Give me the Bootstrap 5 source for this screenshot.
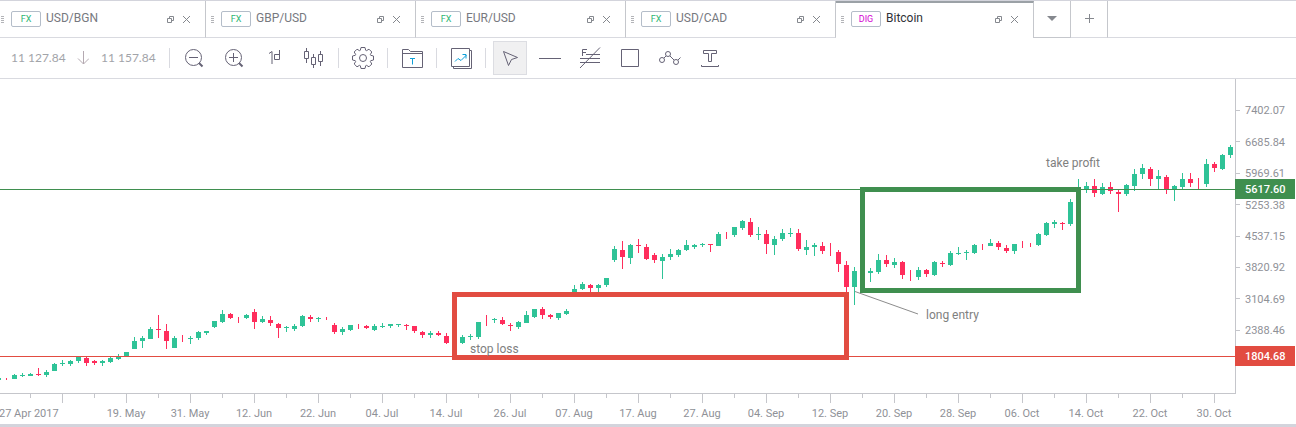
<!DOCTYPE html>
<html lang="en">
<head>
<meta charset="utf-8">
<meta name="viewport" content="width=device-width, initial-scale=1">
<title>Bitcoin chart</title>
<link rel="stylesheet" href="https://cdn.jsdelivr.net/npm/bootstrap@5.3.0/dist/css/bootstrap.min.css">
<style>
  body { font-family: Roboto, sans-serif; font-size: 12px; line-height: 16px; color: #77797f; }
  .tabs-strip { border-top: 1px solid #d3d4dc; height: 38px; }
  .doc-tab { flex: 0 1 210px; height: 37px; padding: 0 15px 0 5px; border-right: 1px solid #c5c7cc; border-bottom: 1px solid #d9dae0; }
  .doc-tab:first-child { flex-basis: 206px; padding-left: 1px; }
  .doc-tab.active { flex-basis: 198px; border-top: 2px solid #9ba1a6; border-bottom: 0; color: #2f3136; padding-bottom: 3px; }
  .doc-tab a { margin-left: 5px; padding-bottom: 2px; }
  .doc-tab .bare + .bare { margin-left: 9px; }
  .grip { width: 10px; height: 7px; flex: none; }
  .kind { width: 30px; height: 16px; border: 1px solid #b4bdc9; border-radius: 2px; font-size: 9px; line-height: 15px; color: #2bb673; flex: none; }
  .kind-dig { color: #d400d4; }
  .tab-btn { width: 37px; height: 37px; padding-bottom: 2px !important; border-right: 1px solid #c5c7cc !important; border-bottom: 1px solid #d9dae0 !important; }
  .tab-menu { border-bottom-color: #c5c7cc !important; }
  .tabs-rest { border-bottom: 1px solid #d9dae0; height: 37px; }
  .bare { background: none; border: 0; padding: 0; display: flex; align-items: center; justify-content: center; }
  .tools { height: 41px; border-bottom: 1px solid #d9dae0; padding-left: 11px; }
  .quote { font-family: Lato, sans-serif; font-size: 12px; color: #a2a4a9; width: 54px; white-space: nowrap; }
  .trend { margin: 0 12px; }
  .tool { width: 34px; height: 34px; color: #656275; }
  .tool + .tool { margin-left: 6px; }
  .tool.active { background: #f0f0f1; outline: 1px solid #dcdde2; outline-offset: -1px; }
  .tool-sep { width: 1px; height: 20px; margin: 0 7px; background: #d9dae0; }
  .quote + .tool-sep { margin-left: 14px; }
  svg { display: block; }
  .icon { fill: none; stroke: currentColor; stroke-width: 1; }
  .chart text { font-family: Roboto, sans-serif; font-size: 11px; fill: #8f9197; }
  .chart .note { font-size: 12px; fill: #808080; }
  .chart .tagtext { fill: #fff; font-weight: 500; }
  .page-end { height: 3px; background: #d3d4dc; }
</style>
<script src="https://cdn.jsdelivr.net/npm/bootstrap@5.3.0/dist/js/bootstrap.bundle.min.js"></script>
</head>
<body>
<svg width="0" height="0" class="position-absolute" aria-hidden="true">
  <symbol id="pop" viewBox="0 0 7 7"><path d="M2.5 2V.5h4v4H5M.5 2.5h4v4h-4z" fill="none" stroke="#85888e"/></symbol>
  <symbol id="close" viewBox="0 0 7 7"><path d="M0 0l7 7M7 0l-7 7" fill="none" stroke="#85888e"/></symbol>
  <symbol id="grip" viewBox="0 0 10 7"><path d="M0 .5h3M0 2.5h3M0 4.5h3M0 6.5h3" stroke="#b3b4b8"/></symbol>
</svg>

<nav class="tabs-strip d-flex" aria-label="Instruments">
  <div class="doc-tab d-flex align-items-center"><svg class="grip"><use href="#grip"/></svg><span class="kind text-center">FX</span><a class="text-reset text-decoration-none me-auto" href="#">USD/BGN</a><button class="bare" aria-label="Detach"><svg width="7" height="7"><use href="#pop"/></svg></button><button class="bare" aria-label="Close"><svg width="7" height="7"><use href="#close"/></svg></button></div>
  <div class="doc-tab d-flex align-items-center"><svg class="grip"><use href="#grip"/></svg><span class="kind text-center">FX</span><a class="text-reset text-decoration-none me-auto" href="#">GBP/USD</a><button class="bare" aria-label="Detach"><svg width="7" height="7"><use href="#pop"/></svg></button><button class="bare" aria-label="Close"><svg width="7" height="7"><use href="#close"/></svg></button></div>
  <div class="doc-tab d-flex align-items-center"><svg class="grip"><use href="#grip"/></svg><span class="kind text-center">FX</span><a class="text-reset text-decoration-none me-auto" href="#">EUR/USD</a><button class="bare" aria-label="Detach"><svg width="7" height="7"><use href="#pop"/></svg></button><button class="bare" aria-label="Close"><svg width="7" height="7"><use href="#close"/></svg></button></div>
  <div class="doc-tab d-flex align-items-center"><svg class="grip"><use href="#grip"/></svg><span class="kind text-center">FX</span><a class="text-reset text-decoration-none me-auto" href="#">USD/CAD</a><button class="bare" aria-label="Detach"><svg width="7" height="7"><use href="#pop"/></svg></button><button class="bare" aria-label="Close"><svg width="7" height="7"><use href="#close"/></svg></button></div>
  <div class="doc-tab active d-flex align-items-center"><svg class="grip"><use href="#grip"/></svg><span class="kind kind-dig text-center">DIG</span><a class="text-reset text-decoration-none me-auto" href="#">Bitcoin</a><button class="bare" aria-label="Detach"><svg width="7" height="7"><use href="#pop"/></svg></button><button class="bare" aria-label="Close"><svg width="7" height="7"><use href="#close"/></svg></button></div>
  <button class="bare tab-btn tab-menu" aria-label="All tabs"><svg width="10" height="5"><path d="M0 0h10L5 5z" fill="#85888e"/></svg></button>
  <button class="bare tab-btn" aria-label="Add tab"><svg width="9" height="9"><path d="M4.500 0v9M0 4.500h9" stroke="#85888e"/></svg></button>
  <div class="tabs-rest flex-grow-1"></div>
</nav>

<div class="tools d-flex align-items-center" role="toolbar">
  <span class="quote">11 127.84</span>
  <svg class="trend" width="12" height="14"><path d="M6.500 0v13M1 7.500l5.500 5.500L12 7.500" fill="none" stroke="#b4a9b1"/></svg>
  <span class="quote">11 157.84</span>
  <span class="tool-sep"></span>
  <button class="bare tool" aria-label="Zoom out"><svg class="icon" width="34" height="34"><circle cx="16.500" cy="16.500" r="8"/><path d="M12 16.500h9"/><path d="M22 22l3.500 3.500" stroke-width="2"/></svg></button>
  <button class="bare tool" aria-label="Zoom in"><svg class="icon" width="34" height="34"><circle cx="16.500" cy="16.500" r="8"/><path d="M12 16.500h9M16.500 12v9"/><path d="M22 22l3.500 3.500" stroke-width="2"/></svg></button>
  <button class="bare tool" aria-label="Period one day"><svg class="icon" width="34" height="34"><path d="M12 12.500l3-2V23M22.500 9v9.500h-5v-5h5"/></svg></button>
  <button class="bare tool" aria-label="Candles"><svg class="icon" width="34" height="34"><path d="M9.500 7v3M9.500 18v4M7.500 10.500h4v7h-4zM16.500 13v4M16.500 24v3M14.500 16.500h4v7h-4zM23.500 10v3M23.500 21v4M21.500 13.500h4v7h-4z"/></svg></button>
  <span class="tool-sep"></span>
  <button class="bare tool" aria-label="Settings"><svg class="icon" width="34" height="34"><g transform="translate(17 17)"><circle r="3.500"/><path d="M10.500-2 10.500 2 7.700 2.700 7.350 3.500 8.800 6 6 8.800 3.500 7.350 2.700 7.700 2 10.500-2 10.500-2.700 7.700-3.500 7.350-6 8.800-8.800 6-7.350 3.500-7.700 2.700-10.500 2-10.500-2-7.700-2.700-7.350-3.500-8.800-6-6-8.800-3.500-7.350-2.700-7.700-2-10.500 2-10.500 2.700-7.700 3.500-7.350 6-8.800 8.800-6 7.350-3.500 7.700-2.700z"/></g></svg></button>
  <span class="tool-sep"></span>
  <button class="bare tool" aria-label="Templates"><svg class="icon" width="34" height="34"><path d="M7.500 26.500v-18h6l2 2h12v16zM7.500 12.500h20"/><path d="M15 17.500h5M17.500 17.500v6" stroke="#0f9fd8"/></svg></button>
  <span class="tool-sep"></span>
  <button class="bare tool" aria-label="Indicators"><svg class="icon" width="34" height="34"><path d="M7.500 7.500h18v18h-18zM25.500 9.500h2v18h-18v-2"/><path d="M11 20.500l3-3 3 2 5.500-5.500M18.500 13.500H22v4" stroke="#0f9fd8"/></svg></button>
  <span class="tool-sep"></span>
  <button class="bare tool active" aria-label="Select"><svg class="icon" width="34" height="34"><path d="M10.500 10.500l14 6-6 2-3 6z"/></svg></button>
  <button class="bare tool" aria-label="Line"><svg class="icon" width="34" height="34"><path d="M6 17.500h22"/></svg></button>
  <button class="bare tool" aria-label="Fibonacci"><svg class="icon" width="34" height="34"><path d="M13 13.500h14M7 17.500h20M7 21.500h20M7 27L27 6.500M9.500 15V8.500H14M9.500 11.500H13"/></svg></button>
  <button class="bare tool" aria-label="Rectangle"><svg class="icon" width="34" height="34"><path d="M8.500 8.500h17v17h-17z"/></svg></button>
  <button class="bare tool" aria-label="Path"><svg class="icon" width="34" height="34"><circle cx="9" cy="19" r="2.500"/><circle cx="15" cy="13" r="2.500"/><circle cx="23" cy="21" r="2.500"/><path d="M11 17l2-2M17 15l4 4M25 19l2.500-2.500"/></svg></button>
  <button class="bare tool" aria-label="Text"><svg class="icon" width="34" height="34"><path d="M10.500 9.500h13v3h-5v8h-3v-8h-5zM8.500 24v1.500h17V24"/></svg></button>
</div>

<main>
  <svg class="chart w-100" viewBox="0 79 1296 345" role="img" aria-label="Bitcoin daily candles">
    <g id="candles" shape-rendering="crispEdges"></g>
    <g fill="#c5c6cb" shape-rendering="crispEdges" id="axes">
      <rect x="1235" y="79" width="1" height="315"/>
      <rect x="0" y="393" width="1236" height="1"/>
    </g>
    <g shape-rendering="crispEdges">
      <rect x="0" y="189" width="1236" height="1" fill="#3f8f4f"/>
      <rect x="0" y="356" width="1236" height="1" fill="#e24c41"/>
      <rect x="454.500" y="294.500" width="392" height="63" fill="none" stroke="#e24c41" stroke-width="5"/>
      <rect x="862.500" y="189.500" width="216" height="101" fill="none" stroke="#3f8f4f" stroke-width="5"/>
    </g>
    <path d="M855 291.500L918 314" stroke="#8c8c8c" fill="none"/>
    <text class="note" x="1046" y="167">take profit</text>
    <text class="note" x="926" y="319">long entry</text>
    <text class="note" x="470" y="353">stop loss</text>
    <g id="labels"></g>
    <rect x="1235" y="179" width="60" height="20" fill="#3f8f4f"/>
    <text class="tagtext" x="1245" y="193">5617.60</text>
    <rect x="1235" y="346" width="60" height="20" fill="#e24c41"/>
    <text class="tagtext" x="1245" y="360">1804.68</text>
  </svg>
</main>
<footer class="page-end"></footer>

<script>
  // One entry per day, 8 units apart: direction, high, body top, body bottom, low.
  // An entry with only two numbers is a bare wick.
  const days = `g378,378,380,380 r378,380 g374,375,379,379 g373,375,376,377 g373,374,376,376 r368,374,375,376 g370,372,375,377 g363,364,371,371
g360,363,364,366 g360,361,364,366 g356,357,361,363 r357,358,363,366 r360,361,363,365 g360,361,363,366 g357,358,362,363 g354,356,359,360
g352,352,356,356 g337,341,349,349 g336,338,341,348 g327,329,339,339 r315,329,330,338 r324,331,341,349 g336,338,348,348 r335,342
g336,338,339,344 g331,332,338,340 g331,331,333,335 g321,321,327,328 g310,314,322,323 r313,314,318,319 r317,323 g314,315,318,319
r309,312,322,329 g316,319,322,323 r316,320,323,326 r323,324,328,338 g326,327,328,332 g324,326,329,331 g315,316,326,327 r315,317,319,322
g317,318,319,322 r317,320 r323,325,332,334 g327,329,332,335 g325,325,330,331 r324,329 r325,326,328,329 g324,326,330,331
g323,326,327,328 g324,324,326,328 g324,324,325,327 r324,325,326,330 r326,326,331,333 r331,332,335,338 g331,333,335,338 r331,333,335,336
r333,336,343,344 r340,342 g335,337,343,344 g334,336,337,340 g322,322,337,339 r315,326 g318,319,320,323 r317,320,324,325
r323,325,326,331 g321,322,327,329 g311,315,323,323 g309,309,317,318 r307,309,315,319 r314,315,317,319 g313,313,318,320 g309,311,314,315
g285,289,292,292 g282,284,289,290 r284,285,288,292 g284,285,288,292 g278,278,285,287 g246,249,260,262 r241,250,257,269 g244,245,258,264
r239,245,246,253 r244,247,259,260 r253,255,260,263 g254,257,261,279 g249,254,257,260 g249,250,255,257 g240,245,250,251 g244,245,247,249
g243,244,245,247 r244,244,245,252 g232,234,246,246 r232,239 g227,227,235,237 g220,221,228,230 r218,222,235,237 g227,234,235,240
r230,234,244,254 g236,239,245,255 g229,233,239,241 g228,233,234,237 r229,233,249,251 g240,247,250,255 g243,245,247,256 r242,246,251,254
r243,256 r250,252,264,272 r261,265,287,292 g267,271,287,305 r270,280 g268,271,273,282 g254,260,272,274 r255,260,264,267
g258,262,265,268 r261,262,275,279 r270,281 g267,270,277,280 r269,270,274,277 g261,262,275,276 r261,263,264,267 g251,253,265,266
g247,253,254,255 g250,252,253,260 g244,245,253,254 r244,250 g239,243,246,246 r241,243,247,250 r245,248,251,253 g244,244,251,254
r241,248 r243,247 g233,234,245,246 g222,223,235,236 g220,222,224,228 r222,223,224,230 g199,202,224,226 g179,189
g182,186,189,193 r179,186,193,197 g183,187,194,195 r182,187,191,194 r190,192,194,212 g184,185,194,196 g169,174,186,191 g164,168,174,179
r167,169,179,186 g170,176,179,189 r175,177,189,194 g185,186,189,201 g173,179,187,189 r173,179,183,187 r178,189 g159,164,184,187
r162,164,168,172 g154,155,169,170 g145,147,155,158`.split(/\s+/);
  // Days whose candles are hidden behind a frame border.
  const hidden = [454, 862];
  const ns = 'http://www.w3.org/2000/svg';
  function add(parent, tag, attrs, text) {
    const el = document.createElementNS(ns, tag);
    for (const k in attrs) el.setAttribute(k, attrs[k]);
    if (text) el.textContent = text;
    document.getElementById(parent).appendChild(el);
  }
  days.forEach((d, i) => {
    const x = -2 + i * 8;
    if (hidden.includes(x)) return;
    const fill = d[0] === 'g' ? '#2fc397' : '#ff2d5c';
    const v = d.slice(1).split(',').map(Number);
    add('candles', 'rect', { x: x, y: v[0], width: 1, height: v[v.length - 1] - v[0], fill });
    if (v.length === 4) add('candles', 'rect', { x: x - 2, y: v[1], width: 5, height: v[2] - v[1], fill });
  });
  ['19. May', '31. May', '12. Jun', '22. Jun', '04. Jul', '14. Jul', '26. Jul', '07. Aug', '17. Aug', '27. Aug', '04. Sep', '12. Sep',
   '20. Sep', '28. Sep', '06. Oct', '14. Oct', '22. Oct', '30. Oct'].forEach((t, i) =>
    add('labels', 'text', { x: 126 + i * 64, y: 417, 'text-anchor': 'middle' }, t));
  add('labels', 'text', { x: -1, y: 417 }, '27 Apr 2017');
  for (let x = 30, n = 0; x < 1236; x += 32, n++) add('axes', 'rect', { x, y: 394, width: 1, height: n % 2 ? 9 : 4 });
  [[110, '7402.07'], [141, '6685.84'], [173, '5969.61'], [204, '5253.38'], [236, '4537.15'], [267, '3820.92'], [298, '3104.69'], [330, '2388.46']]
    .forEach(([y, t]) => {
      add('axes', 'rect', { x: 1236, y, width: 4, height: 1 });
      add('labels', 'text', { x: 1245, y: y + 4 + (y === 141 || y === 204 || y === 298 ? 1 : 0) }, t);
    });
</script>
</body>
</html>
